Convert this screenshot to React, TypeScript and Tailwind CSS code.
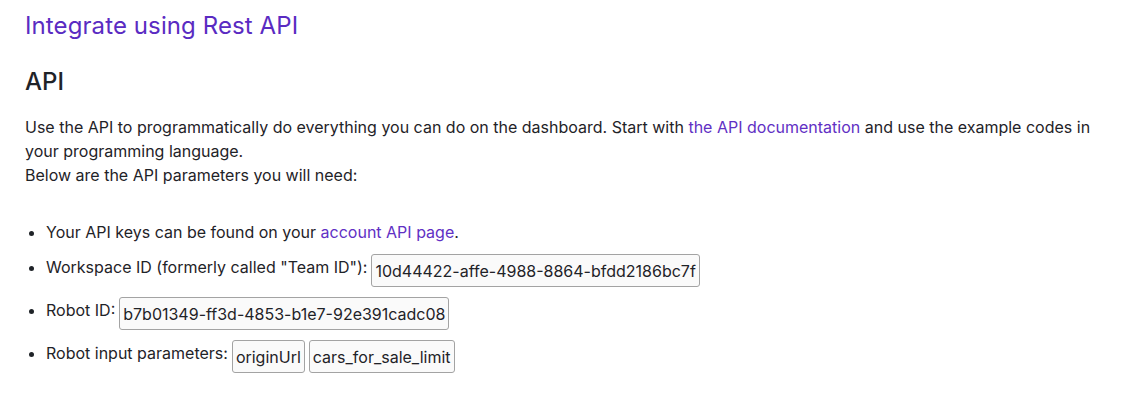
const params = ["originUrl", "cars_for_sale_limit"];

function Code({ children }: { children: React.ReactNode }) {
  return (
    <span className="inline-block rounded-[3px] border border-[#a3a3a3] bg-[#fafafa] px-[3px] pt-[4px] pb-[3px] text-[16px] leading-[24px] text-[#1f2328]">
      {children}
    </span>
  );
}

export default function App() {
  return (
    <div
      className="min-h-[411px] bg-white px-[25px] pt-[10px] text-[#1f2328]"
      style={{ fontFamily: "Inter, 'Noto Sans', sans-serif" }}
    >
      <h1 className="text-[24px] leading-[32px] font-normal tracking-[0.1px] text-[#5a2bc2]">
        Integrate using Rest API
      </h1>

      <h2 className="mt-[24px] text-[24px] leading-[32px] font-medium">API</h2>

      <p className="mt-[17px] text-[16px] leading-[24px]">
        Use the API to programmatically do everything you can do on the dashboard. Start with{" "}
        <a className="text-[#6130c4]">the API documentation</a> and use the example codes in
        your programming language.
        <br />
        Below are the API parameters you will need:
      </p>

      <ul className="mt-[33px] flex list-disc flex-col gap-[10px] pl-[21px] text-[16px] leading-[24px]">
        <li>
          Your API keys can be found on your <a className="text-[#6130c4]">account API page</a>.
        </li>
        <li>
          <div className="flex items-start gap-[4px]">
            <span className="pt-[1px]">Workspace ID (formerly called "Team ID"):</span>
            <Code>10d44422-affe-4988-8864-bfdd2186bc7f</Code>
          </div>
        </li>
        <li>
          <div className="flex items-start gap-[4px]">
            <span className="pt-[1px]">Robot ID:</span>
            <Code>b7b01349-ff3d-4853-b1e7-92e391cadc08</Code>
          </div>
        </li>
        <li>
          <div className="flex items-start gap-[4px]">
            <span className="pt-[1px]">Robot input parameters:</span>
            {params.map((p) => (
              <Code key={p}>{p}</Code>
            ))}
          </div>
        </li>
      </ul>
    </div>
  );
}
